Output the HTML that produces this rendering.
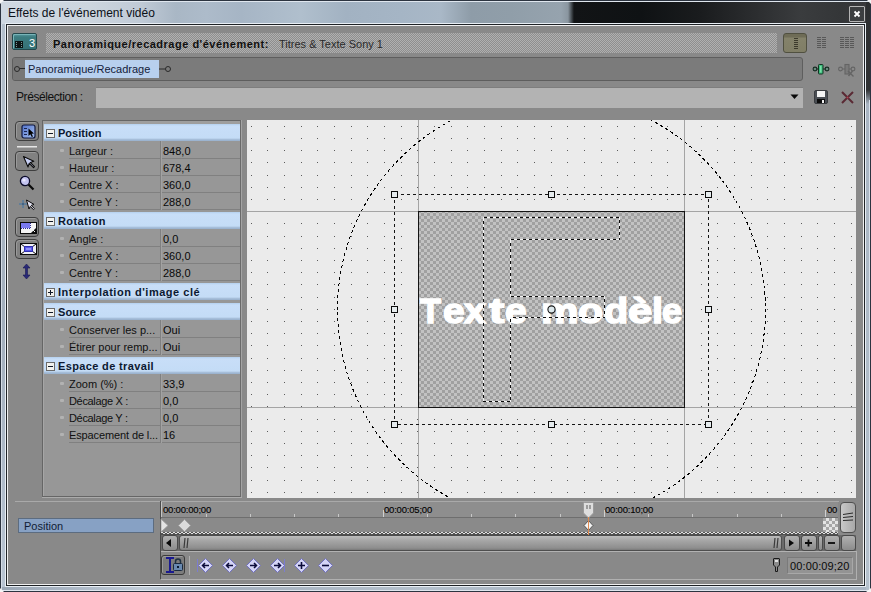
<!DOCTYPE html><html><head><meta charset="utf-8"><style>
*{margin:0;padding:0;box-sizing:border-box}
html,body{width:871px;height:592px;overflow:hidden;background:#fff}
body{position:relative;font-family:"Liberation Sans",sans-serif;}
.ab{position:absolute}
.t{position:absolute;white-space:nowrap;line-height:1}
</style></head><body>
<div class="ab" style="left:0px;top:0px;width:871px;height:592px;background:#2c3440"></div>
<div class="ab" style="left:1px;top:1px;width:869px;height:1px;background:#dfe6ee"></div>
<div class="ab" style="left:1px;top:2px;width:869px;height:22px;background:linear-gradient(90deg,#cfd8e1 0px,#ccd5de 90px,#c0cad6 140px,#a9b7c5 175px,#adbbca 205px,#a6b5c5 240px,#b0bfcd 300px,#a2b2c2 345px,#a5b5c5 400px,#a9b8c7 440px,#8e9ca8 470px,#909ea9 510px,#96a3ae 560px,#8a96a0 567px,#121416 573px,#0f1214 640px,#1a1c1e 700px,#2a2c2e 750px,#3a3c3e 800px,#343638 840px,#3a3a3c 869px)"></div>
<div class="ab" style="left:1px;top:24px;width:1px;height:567px;background:#d4dce6"></div>
<div class="ab" style="left:2px;top:24px;width:3px;height:567px;background:linear-gradient(180deg,#b4c0cc,#a2aebc 300px,#b8c4d2 560px)"></div>
<div class="ab" style="left:866px;top:2px;width:4px;height:589px;background:linear-gradient(180deg,#2c2e30 0px,#303234 88px,#a8b4c2 102px,#b0bcc8 400px,#b4c0cc 589px)"></div>
<div class="ab" style="left:865px;top:24px;width:1px;height:567px;background:#dfe6ee"></div>
<div class="ab" style="left:2px;top:587px;width:864px;height:3px;background:linear-gradient(90deg,#9aa6b4,#a8b4c2 60px,#c0ccd8 140px,#a4b0be 220px,#b4c0cc 420px,#a4b0be 600px,#aab6c4)"></div>
<div class="ab" style="left:5px;top:23px;width:861px;height:564px;background:#e8eef4"></div>
<div class="ab" style="left:6px;top:24px;width:859px;height:562px;background:#1e2226"></div>
<div class="ab" style="left:7px;top:25px;width:857px;height:560px;background:#f0f0f0"></div>
<div class="ab" style="left:8px;top:26px;width:855px;height:558px;background:#898989"></div>
<div class="ab" style="left:1px;top:590px;width:868px;height:1px;background:#dfe6ee"></div>
<div class="ab" style="left:869px;top:100px;width:1px;height:491px;background:#d8e0ea"></div>
<div class="ab" style="left:866px;top:588px;width:5px;height:4px;background:#f4f4f4;clip-path:polygon(100% 0,100% 100%,0 100%)"></div>
<div class="ab" style="left:0px;top:588px;width:4px;height:4px;background:#f4f4f4;clip-path:polygon(0 0,100% 100%,0 100%)"></div>
<div class="ab" style="left:0px;top:0px;width:4px;height:4px;background:#f4f4f4;clip-path:polygon(0 0,100% 0,0 100%)"></div>
<div class="ab" style="left:867px;top:0px;width:4px;height:4px;background:#f4f4f4;clip-path:polygon(0 0,100% 0,100% 100%)"></div>
<div class="t" style="left:8px;top:6.84px;font-size:12px;color:#0c1018;font-weight:normal;">Effets de l'événement vidéo</div>
<div class="ab" style="left:849px;top:6px;width:16px;height:16px;border:1px solid #b4b4b4;background:#3c3e40;border-radius:1px"></div>
<svg class="ab" style="left:849px;top:6px" width="16" height="16"><path d="M5.5 5.5L10.5 10.5M10.5 5.5L5.5 10.5" stroke="#fff" stroke-width="1.8"/></svg>
<div class="ab" style="left:12px;top:33px;width:25px;height:17px;background:linear-gradient(180deg,#5a9aa0 0px,#3c7c80 3px,#357074 16px);border:1px solid #24484c;border-radius:2px;box-shadow:inset 1px 1px 0 #78b4b8"></div>
<div class="ab" style="left:15px;top:41px;width:8px;height:7px;background:#0c1414"></div>
<svg class="ab" style="left:15px;top:41px" width="8" height="7"><g fill="#7a9a9a"><rect x="1" y="1" width="1" height="1"/><rect x="6" y="1" width="1" height="1"/><rect x="1" y="3" width="1" height="1"/><rect x="6" y="3" width="1" height="1"/><rect x="1" y="5" width="1" height="1"/><rect x="6" y="5" width="1" height="1"/></g></svg>
<div class="t" style="left:29px;top:37.69px;font-size:11px;color:#ffffff;font-weight:normal;">3</div>
<div class="ab" style="left:46px;top:33px;width:731px;height:20px;background:repeating-conic-gradient(#b0b0b0 0 25%,#8e8e8e 0 50%) 0 0/2px 2px"></div>
<div class="t" style="left:53px;top:38.69px;font-size:11px;color:#101010;font-weight:bold;letter-spacing:0.5px">Panoramique/recadrage d'événement:</div>
<div class="t" style="left:279px;top:38.69px;font-size:11px;color:#2a2a2a;font-weight:normal;">Titres &amp; Texte Sony 1</div>
<div class="ab" style="left:783px;top:33px;width:24px;height:20px;background:linear-gradient(180deg,#6e6c56 0,#6e6c56 3px,#84826a 4px,#807e66 100%);border:1px solid #505040;border-radius:3px"></div>
<svg class="ab" style="left:783px;top:33px" width="24" height="20"><g fill="#3c3a2c"><rect x="11" y="5" width="4" height="1"/><rect x="11" y="7" width="4" height="1"/><rect x="11" y="9" width="4" height="1"/><rect x="11" y="11" width="4" height="1"/><rect x="11" y="13" width="4" height="1"/><rect x="11" y="15" width="4" height="1"/></g></svg>
<svg class="ab" style="left:816px;top:36px" width="12" height="14"><g fill="#585858"><rect x="1" y="1" width="4" height="1"/><rect x="6" y="1" width="4" height="1"/><rect x="1" y="3" width="4" height="1"/><rect x="6" y="3" width="4" height="1"/><rect x="1" y="5" width="4" height="1"/><rect x="6" y="5" width="4" height="1"/><rect x="1" y="7" width="4" height="1"/><rect x="6" y="7" width="4" height="1"/><rect x="1" y="9" width="4" height="1"/><rect x="6" y="9" width="4" height="1"/><rect x="1" y="11" width="4" height="1"/><rect x="6" y="11" width="4" height="1"/></g></svg>
<svg class="ab" style="left:839px;top:36px" width="16" height="14"><g fill="#585858"><rect x="1" y="1" width="4" height="1"/><rect x="6" y="1" width="4" height="1"/><rect x="11" y="1" width="4" height="1"/><rect x="1" y="3" width="4" height="1"/><rect x="6" y="3" width="4" height="1"/><rect x="11" y="3" width="4" height="1"/><rect x="1" y="5" width="4" height="1"/><rect x="6" y="5" width="4" height="1"/><rect x="11" y="5" width="4" height="1"/><rect x="1" y="7" width="4" height="1"/><rect x="6" y="7" width="4" height="1"/><rect x="11" y="7" width="4" height="1"/><rect x="1" y="9" width="4" height="1"/><rect x="6" y="9" width="4" height="1"/><rect x="11" y="9" width="4" height="1"/><rect x="1" y="11" width="4" height="1"/><rect x="6" y="11" width="4" height="1"/><rect x="11" y="11" width="4" height="1"/></g></svg>
<div class="ab" style="left:12px;top:57px;width:791px;height:24px;background:#7b7b7b;border:1px solid #5e5e5e;border-radius:3px"></div>
<div class="ab" style="left:13px;top:58px;width:12px;height:22px;background:#777;border-radius:2px 0 0 2px"></div>
<div class="ab" style="left:25px;top:60px;width:134px;height:18px;background:#b8d0ee"></div>
<div class="t" style="left:28px;top:63.69px;font-size:11px;color:#14203a;font-weight:normal;">Panoramique/Recadrage</div>
<svg class="ab" style="left:12px;top:60px" width="14" height="18"><circle cx="5" cy="9" r="2.5" fill="none" stroke="#2a2a2a" stroke-width="1"/><path d="M7.5 8.5H13" stroke="#2a2a2a"/></svg>
<svg class="ab" style="left:159px;top:60px" width="14" height="18"><circle cx="9" cy="9" r="2.5" fill="none" stroke="#2a2a2a" stroke-width="1"/><path d="M0 9H6.5" stroke="#2a2a2a"/></svg>
<svg class="ab" style="left:812px;top:62px" width="18" height="14"><circle cx="3" cy="7" r="1.9" fill="#6a8a7e" stroke="#142a20" stroke-width="1.1"/><circle cx="15" cy="7" r="1.9" fill="#6a8a7e" stroke="#142a20" stroke-width="1.1"/><path d="M4.5 7H7M11 7H13.5" stroke="#142a20"/><rect x="6.5" y="2.5" width="4.5" height="9.5" rx="0.8" fill="#3cbc7c" stroke="#143424" stroke-width="1"/><rect x="8" y="4" width="1.5" height="6.5" fill="#7ae0a8"/></svg>
<svg class="ab" style="left:837px;top:62px" width="20" height="17"><g stroke="#646464" fill="none" stroke-width="1.1"><circle cx="3.5" cy="7" r="1.9"/><circle cx="16" cy="7" r="1.9"/><path d="M5.5 7H8M12 7H14"/><rect x="8" y="2.5" width="4" height="9.5" fill="#7a7a7a"/><path d="M11 9L16.5 14.5M15.5 9L11.5 14" stroke-width="1.4"/></g></svg>
<div class="t" style="left:16px;top:90.84px;font-size:12px;color:#101010;font-weight:normal;letter-spacing:-0.43px">Présélection :</div>
<div class="ab" style="left:96px;top:87px;width:707px;height:21px;background:#b3b3b3;border-top:1px solid #7e7e7e"></div>
<svg class="ab" style="left:790px;top:94px" width="10" height="6"><path d="M0.5 0.5H8.5L4.5 5Z" fill="#0a0a0a"/></svg>
<svg class="ab" style="left:814px;top:90px" width="15" height="14"><rect x="0.5" y="0.5" width="13" height="13" rx="1.5" fill="#4a4e54" stroke="#3a3c40"/><rect x="3" y="1" width="8" height="6" fill="#f4f4f4"/><rect x="3" y="9" width="8" height="4" fill="#0a0a0a"/><rect x="8" y="10" width="2" height="3" fill="#f0f0f0"/></svg>
<svg class="ab" style="left:840px;top:90px" width="15" height="15"><path d="M2 2L13 13M13 2L2 13" stroke="#5a2a34" stroke-width="2"/><circle cx="7.5" cy="7.5" r="1" fill="#b04050"/></svg>
<div class="ab" style="left:15px;top:121px;width:24px;height:20px;background:#818181;border:1px solid #3e3e3e;border-radius:4px;box-shadow:inset 1px 1px 0 #9a9a9a"></div>
<svg class="ab" style="left:21px;top:124px" width="15" height="15"><rect x="1" y="1" width="13" height="13" rx="2" fill="url(#gb1)" stroke="#101840" stroke-width="1.2"/><defs><linearGradient id="gb1" x1="0" y1="0" x2="1" y2="1"><stop offset="0" stop-color="#5070c8"/><stop offset="1" stop-color="#a8c4f4"/></linearGradient></defs><g fill="#1a2450"><rect x="3" y="4" width="3" height="1"/><rect x="3" y="7" width="3" height="1"/><rect x="3" y="10" width="3" height="1"/></g><path d="M7.5 4.5V12L9.3 10.3L10.8 13L12 12.4L10.6 9.8L13 9.6Z" fill="#000"/></svg>
<div class="ab" style="left:17px;top:146px;width:20px;height:1px;background:#e6e6e6"></div>
<div class="ab" style="left:17px;top:147px;width:20px;height:1px;background:#b8b8b8"></div>
<div class="ab" style="left:15px;top:151px;width:24px;height:20px;background:#818181;border:1px solid #3e3e3e;border-radius:4px;box-shadow:inset 1px 1px 0 #9a9a9a"></div>
<svg class="ab" style="left:20px;top:154px" width="18" height="16"><path d="M3.5 2.5L8 13L9.2 9.4L13.5 13.7L14.5 12.7L10.2 8.4L13.8 7.2Z" fill="#c8d0f4" stroke="#0a0a0a" stroke-width="1.1" stroke-linejoin="round"/></svg>
<svg class="ab" style="left:18px;top:174px" width="18" height="18"><circle cx="7" cy="7" r="4.6" fill="#c4c4f0" stroke="#0a0a2a" stroke-width="1.3"/><circle cx="6" cy="6" r="1.6" fill="#e8e8fc"/><path d="M10.5 10.5L15.5 15.5" stroke="#0a0a0a" stroke-width="2.2"/></svg>
<svg class="ab" style="left:17px;top:197px" width="20" height="16"><path d="M6 3V11M2 7H10" stroke="#a8d0f0" stroke-width="2" opacity="0.6"/><path d="M6 3V11M2 7H10" stroke="#2a4a6a" stroke-width="1"/><path d="M9.5 3L12 12L13.2 9.4L16.5 12.6L17.5 11.6L14.2 8.4L17 7.4Z" fill="#e0e0f0" stroke="#0a0a0a" stroke-width="1"/></svg>
<div class="ab" style="left:15px;top:217px;width:24px;height:20px;background:#818181;border:1px solid #3e3e3e;border-radius:4px;box-shadow:inset 1px 1px 0 #9a9a9a"></div>
<svg class="ab" style="left:20px;top:222px" width="17" height="12"><rect x="0.5" y="0.5" width="16" height="11" fill="#f4f4f4" stroke="#0a0a0a"/><rect x="1" y="1" width="9" height="5" fill="#7a7af0"/><path d="M1 6.5H10.5V1" stroke="#2a2a9a" stroke-dasharray="1 1" fill="none"/><path d="M16 11L11 11L16 6Z" fill="#0a0a0a"/><path d="M12 7L15 10" stroke="#f4f4f4"/></svg>
<div class="ab" style="left:15px;top:239px;width:24px;height:20px;background:#818181;border:1px solid #3e3e3e;border-radius:4px;box-shadow:inset 1px 1px 0 #9a9a9a"></div>
<svg class="ab" style="left:20px;top:243px" width="17" height="12"><rect x="0.5" y="0.5" width="16" height="11" fill="#f0f0f8" stroke="#0a0a0a"/><path d="M1 1L5 4M16 1L12 4M1 11L5 8M16 11L12 8" stroke="#0a0a0a"/><rect x="4.5" y="3.5" width="8" height="5" fill="#5858e8" stroke="#3030b0"/><rect x="6" y="5" width="5" height="2" fill="#9090f8"/></svg>
<svg class="ab" style="left:22px;top:263px" width="10" height="17"><path d="M4.5 1L1 5H3.5V12H1L4.5 16L8 12H5.5V5H8Z" fill="#2a2a78" stroke="#1a1a50" stroke-width="0.6"/></svg>
<div class="ab" style="left:42px;top:120px;width:199px;height:377px;background:#979797;border:1px solid #666;border-right:1px solid #6a6a6a"></div>
<div class="ab" style="left:43px;top:121px;width:1px;height:375px;background:#a6a6a6"></div>
<div class="ab" style="left:43px;top:121px;width:197px;height:3px;background:#9e9e9e"></div>
<div class="ab" style="left:241px;top:120px;width:1px;height:377px;background:#a4a4a4"></div>
<div class="ab" style="left:42px;top:497px;width:200px;height:1px;background:#ababab"></div>
<div class="ab" style="left:44px;top:124px;width:196px;height:17px;background:linear-gradient(180deg,#b4d0ee 0,#c8def8 2px,#c4dcf6 14px,#9cb4d0 16px)"></div>
<svg class="ab" style="left:46px;top:129px" width="9" height="9"><rect x="0.5" y="0.5" width="8" height="8" fill="#f2f2ee" stroke="#6a6a6a"/><path d="M2 4.5H7" stroke="#101828" stroke-width="1"/></svg>
<div class="t" style="left:58px;top:127.69px;font-size:11px;color:#0c1830;font-weight:bold;letter-spacing:0px">Position</div>
<div class="ab" style="left:69px;top:158px;width:171px;height:1px;background:#808080"></div>
<div class="ab" style="left:60px;top:149px;width:4px;height:3px;background:#b2b2b2;border-radius:1px"></div>
<div class="t" style="left:69px;top:145.69px;font-size:11px;color:#101010;font-weight:normal;">Largeur :</div>
<div class="t" style="left:163px;top:145.69px;font-size:11px;color:#080808;font-weight:normal;">848,0</div>
<div class="ab" style="left:69px;top:175px;width:171px;height:1px;background:#808080"></div>
<div class="ab" style="left:60px;top:166px;width:4px;height:3px;background:#b2b2b2;border-radius:1px"></div>
<div class="t" style="left:69px;top:162.69px;font-size:11px;color:#101010;font-weight:normal;">Hauteur :</div>
<div class="t" style="left:163px;top:162.69px;font-size:11px;color:#080808;font-weight:normal;">678,4</div>
<div class="ab" style="left:69px;top:192px;width:171px;height:1px;background:#808080"></div>
<div class="ab" style="left:60px;top:183px;width:4px;height:3px;background:#b2b2b2;border-radius:1px"></div>
<div class="t" style="left:69px;top:179.69px;font-size:11px;color:#101010;font-weight:normal;">Centre X :</div>
<div class="t" style="left:163px;top:179.69px;font-size:11px;color:#080808;font-weight:normal;">360,0</div>
<div class="ab" style="left:69px;top:209px;width:171px;height:1px;background:#808080"></div>
<div class="ab" style="left:60px;top:200px;width:4px;height:3px;background:#b2b2b2;border-radius:1px"></div>
<div class="t" style="left:69px;top:196.69px;font-size:11px;color:#101010;font-weight:normal;">Centre Y :</div>
<div class="t" style="left:163px;top:196.69px;font-size:11px;color:#080808;font-weight:normal;">288,0</div>
<div class="ab" style="left:160px;top:141px;width:1px;height:69px;background:#808080"></div>
<div class="ab" style="left:161px;top:141px;width:1px;height:69px;background:#a2a2a2"></div>
<div class="ab" style="left:44px;top:212px;width:196px;height:17px;background:linear-gradient(180deg,#b4d0ee 0,#c8def8 2px,#c4dcf6 14px,#9cb4d0 16px)"></div>
<svg class="ab" style="left:46px;top:217px" width="9" height="9"><rect x="0.5" y="0.5" width="8" height="8" fill="#f2f2ee" stroke="#6a6a6a"/><path d="M2 4.5H7" stroke="#101828" stroke-width="1"/></svg>
<div class="t" style="left:58px;top:215.69px;font-size:11px;color:#0c1830;font-weight:bold;letter-spacing:0.42px">Rotation</div>
<div class="ab" style="left:69px;top:246px;width:171px;height:1px;background:#808080"></div>
<div class="ab" style="left:60px;top:237px;width:4px;height:3px;background:#b2b2b2;border-radius:1px"></div>
<div class="t" style="left:69px;top:233.69px;font-size:11px;color:#101010;font-weight:normal;">Angle :</div>
<div class="t" style="left:163px;top:233.69px;font-size:11px;color:#080808;font-weight:normal;">0,0</div>
<div class="ab" style="left:69px;top:263px;width:171px;height:1px;background:#808080"></div>
<div class="ab" style="left:60px;top:254px;width:4px;height:3px;background:#b2b2b2;border-radius:1px"></div>
<div class="t" style="left:69px;top:250.69px;font-size:11px;color:#101010;font-weight:normal;">Centre X :</div>
<div class="t" style="left:163px;top:250.69px;font-size:11px;color:#080808;font-weight:normal;">360,0</div>
<div class="ab" style="left:69px;top:280px;width:171px;height:1px;background:#808080"></div>
<div class="ab" style="left:60px;top:271px;width:4px;height:3px;background:#b2b2b2;border-radius:1px"></div>
<div class="t" style="left:69px;top:267.69px;font-size:11px;color:#101010;font-weight:normal;">Centre Y :</div>
<div class="t" style="left:163px;top:267.69px;font-size:11px;color:#080808;font-weight:normal;">288,0</div>
<div class="ab" style="left:160px;top:229px;width:1px;height:52px;background:#808080"></div>
<div class="ab" style="left:161px;top:229px;width:1px;height:52px;background:#a2a2a2"></div>
<div class="ab" style="left:44px;top:283px;width:196px;height:17px;background:linear-gradient(180deg,#b4d0ee 0,#c8def8 2px,#c4dcf6 14px,#9cb4d0 16px)"></div>
<svg class="ab" style="left:46px;top:288px" width="9" height="9"><rect x="0.5" y="0.5" width="8" height="8" fill="#f2f2ee" stroke="#6a6a6a"/><path d="M2 4.5H7M4.5 2V7" stroke="#101828" stroke-width="1"/></svg>
<div class="t" style="left:58px;top:286.69px;font-size:11px;color:#0c1830;font-weight:bold;letter-spacing:0.52px">Interpolation d'image clé</div>
<div class="ab" style="left:44px;top:303px;width:196px;height:17px;background:linear-gradient(180deg,#b4d0ee 0,#c8def8 2px,#c4dcf6 14px,#9cb4d0 16px)"></div>
<svg class="ab" style="left:46px;top:308px" width="9" height="9"><rect x="0.5" y="0.5" width="8" height="8" fill="#f2f2ee" stroke="#6a6a6a"/><path d="M2 4.5H7" stroke="#101828" stroke-width="1"/></svg>
<div class="t" style="left:58px;top:306.69px;font-size:11px;color:#0c1830;font-weight:bold;letter-spacing:0.12px">Source</div>
<div class="ab" style="left:69px;top:337px;width:171px;height:1px;background:#808080"></div>
<div class="ab" style="left:60px;top:328px;width:4px;height:3px;background:#b2b2b2;border-radius:1px"></div>
<div class="t" style="left:69px;top:324.69px;font-size:11px;color:#101010;font-weight:normal;">Conserver les p...</div>
<div class="t" style="left:163px;top:324.69px;font-size:11px;color:#080808;font-weight:normal;">Oui</div>
<div class="ab" style="left:69px;top:354px;width:171px;height:1px;background:#808080"></div>
<div class="ab" style="left:60px;top:345px;width:4px;height:3px;background:#b2b2b2;border-radius:1px"></div>
<div class="t" style="left:69px;top:341.69px;font-size:11px;color:#101010;font-weight:normal;">Étirer pour remp...</div>
<div class="t" style="left:163px;top:341.69px;font-size:11px;color:#080808;font-weight:normal;">Oui</div>
<div class="ab" style="left:160px;top:320px;width:1px;height:35px;background:#808080"></div>
<div class="ab" style="left:161px;top:320px;width:1px;height:35px;background:#a2a2a2"></div>
<div class="ab" style="left:44px;top:357px;width:196px;height:17px;background:linear-gradient(180deg,#b4d0ee 0,#c8def8 2px,#c4dcf6 14px,#9cb4d0 16px)"></div>
<svg class="ab" style="left:46px;top:362px" width="9" height="9"><rect x="0.5" y="0.5" width="8" height="8" fill="#f2f2ee" stroke="#6a6a6a"/><path d="M2 4.5H7" stroke="#101828" stroke-width="1"/></svg>
<div class="t" style="left:58px;top:360.69px;font-size:11px;color:#0c1830;font-weight:bold;letter-spacing:0.36px">Espace de travail</div>
<div class="ab" style="left:69px;top:391px;width:171px;height:1px;background:#808080"></div>
<div class="ab" style="left:60px;top:382px;width:4px;height:3px;background:#b2b2b2;border-radius:1px"></div>
<div class="t" style="left:69px;top:378.69px;font-size:11px;color:#101010;font-weight:normal;">Zoom (%) :</div>
<div class="t" style="left:163px;top:378.69px;font-size:11px;color:#080808;font-weight:normal;">33,9</div>
<div class="ab" style="left:69px;top:408px;width:171px;height:1px;background:#808080"></div>
<div class="ab" style="left:60px;top:399px;width:4px;height:3px;background:#b2b2b2;border-radius:1px"></div>
<div class="t" style="left:69px;top:395.69px;font-size:11px;color:#101010;font-weight:normal;letter-spacing:-0.33px">Décalage X :</div>
<div class="t" style="left:163px;top:395.69px;font-size:11px;color:#080808;font-weight:normal;">0,0</div>
<div class="ab" style="left:69px;top:425px;width:171px;height:1px;background:#808080"></div>
<div class="ab" style="left:60px;top:416px;width:4px;height:3px;background:#b2b2b2;border-radius:1px"></div>
<div class="t" style="left:69px;top:412.69px;font-size:11px;color:#101010;font-weight:normal;letter-spacing:-0.33px">Décalage Y :</div>
<div class="t" style="left:163px;top:412.69px;font-size:11px;color:#080808;font-weight:normal;">0,0</div>
<div class="ab" style="left:69px;top:442px;width:171px;height:1px;background:#808080"></div>
<div class="ab" style="left:60px;top:433px;width:4px;height:3px;background:#b2b2b2;border-radius:1px"></div>
<div class="t" style="left:69px;top:429.69px;font-size:11px;color:#101010;font-weight:normal;letter-spacing:-0.12px">Espacement de l...</div>
<div class="t" style="left:163px;top:429.69px;font-size:11px;color:#080808;font-weight:normal;">16</div>
<div class="ab" style="left:160px;top:374px;width:1px;height:69px;background:#808080"></div>
<div class="ab" style="left:161px;top:374px;width:1px;height:69px;background:#a2a2a2"></div>
<svg class="ab" style="left:247px;top:120px" width="609" height="378" shape-rendering="crispEdges"><defs><pattern id="chk" x="0" y="0" width="6" height="6" patternUnits="userSpaceOnUse"><rect width="6" height="6" fill="#a0a0a0"/><rect width="3" height="3" fill="#c2c2c2"/><rect x="3" y="3" width="3" height="3" fill="#c2c2c2"/></pattern></defs><rect width="609" height="378" fill="#ebebeb"/><path d="M4 6h1v1h-1zM4 18h1v1h-1zM4 30h1v1h-1zM4 42h1v1h-1zM4 55h1v1h-1zM4 67h1v1h-1zM4 79h1v1h-1zM4 91h1v1h-1zM4 103h1v1h-1zM4 116h1v1h-1zM4 128h1v1h-1zM4 140h1v1h-1zM4 152h1v1h-1zM4 164h1v1h-1zM4 177h1v1h-1zM4 189h1v1h-1zM4 201h1v1h-1zM4 213h1v1h-1zM4 225h1v1h-1zM4 238h1v1h-1zM4 250h1v1h-1zM4 262h1v1h-1zM4 274h1v1h-1zM4 286h1v1h-1zM4 299h1v1h-1zM4 311h1v1h-1zM4 323h1v1h-1zM4 335h1v1h-1zM4 347h1v1h-1zM4 360h1v1h-1zM4 372h1v1h-1zM20 6h1v1h-1zM20 18h1v1h-1zM20 30h1v1h-1zM20 42h1v1h-1zM20 55h1v1h-1zM20 67h1v1h-1zM20 79h1v1h-1zM20 91h1v1h-1zM20 103h1v1h-1zM20 116h1v1h-1zM20 128h1v1h-1zM20 140h1v1h-1zM20 152h1v1h-1zM20 164h1v1h-1zM20 177h1v1h-1zM20 189h1v1h-1zM20 201h1v1h-1zM20 213h1v1h-1zM20 225h1v1h-1zM20 238h1v1h-1zM20 250h1v1h-1zM20 262h1v1h-1zM20 274h1v1h-1zM20 286h1v1h-1zM20 299h1v1h-1zM20 311h1v1h-1zM20 323h1v1h-1zM20 335h1v1h-1zM20 347h1v1h-1zM20 360h1v1h-1zM20 372h1v1h-1zM37 6h1v1h-1zM37 18h1v1h-1zM37 30h1v1h-1zM37 42h1v1h-1zM37 55h1v1h-1zM37 67h1v1h-1zM37 79h1v1h-1zM37 91h1v1h-1zM37 103h1v1h-1zM37 116h1v1h-1zM37 128h1v1h-1zM37 140h1v1h-1zM37 152h1v1h-1zM37 164h1v1h-1zM37 177h1v1h-1zM37 189h1v1h-1zM37 201h1v1h-1zM37 213h1v1h-1zM37 225h1v1h-1zM37 238h1v1h-1zM37 250h1v1h-1zM37 262h1v1h-1zM37 274h1v1h-1zM37 286h1v1h-1zM37 299h1v1h-1zM37 311h1v1h-1zM37 323h1v1h-1zM37 335h1v1h-1zM37 347h1v1h-1zM37 360h1v1h-1zM37 372h1v1h-1zM54 6h1v1h-1zM54 18h1v1h-1zM54 30h1v1h-1zM54 42h1v1h-1zM54 55h1v1h-1zM54 67h1v1h-1zM54 79h1v1h-1zM54 91h1v1h-1zM54 103h1v1h-1zM54 116h1v1h-1zM54 128h1v1h-1zM54 140h1v1h-1zM54 152h1v1h-1zM54 164h1v1h-1zM54 177h1v1h-1zM54 189h1v1h-1zM54 201h1v1h-1zM54 213h1v1h-1zM54 225h1v1h-1zM54 238h1v1h-1zM54 250h1v1h-1zM54 262h1v1h-1zM54 274h1v1h-1zM54 286h1v1h-1zM54 299h1v1h-1zM54 311h1v1h-1zM54 323h1v1h-1zM54 335h1v1h-1zM54 347h1v1h-1zM54 360h1v1h-1zM54 372h1v1h-1zM70 6h1v1h-1zM70 18h1v1h-1zM70 30h1v1h-1zM70 42h1v1h-1zM70 55h1v1h-1zM70 67h1v1h-1zM70 79h1v1h-1zM70 91h1v1h-1zM70 103h1v1h-1zM70 116h1v1h-1zM70 128h1v1h-1zM70 140h1v1h-1zM70 152h1v1h-1zM70 164h1v1h-1zM70 177h1v1h-1zM70 189h1v1h-1zM70 201h1v1h-1zM70 213h1v1h-1zM70 225h1v1h-1zM70 238h1v1h-1zM70 250h1v1h-1zM70 262h1v1h-1zM70 274h1v1h-1zM70 286h1v1h-1zM70 299h1v1h-1zM70 311h1v1h-1zM70 323h1v1h-1zM70 335h1v1h-1zM70 347h1v1h-1zM70 360h1v1h-1zM70 372h1v1h-1zM87 6h1v1h-1zM87 18h1v1h-1zM87 30h1v1h-1zM87 42h1v1h-1zM87 55h1v1h-1zM87 67h1v1h-1zM87 79h1v1h-1zM87 91h1v1h-1zM87 103h1v1h-1zM87 116h1v1h-1zM87 128h1v1h-1zM87 140h1v1h-1zM87 152h1v1h-1zM87 164h1v1h-1zM87 177h1v1h-1zM87 189h1v1h-1zM87 201h1v1h-1zM87 213h1v1h-1zM87 225h1v1h-1zM87 238h1v1h-1zM87 250h1v1h-1zM87 262h1v1h-1zM87 274h1v1h-1zM87 286h1v1h-1zM87 299h1v1h-1zM87 311h1v1h-1zM87 323h1v1h-1zM87 335h1v1h-1zM87 347h1v1h-1zM87 360h1v1h-1zM87 372h1v1h-1zM104 6h1v1h-1zM104 18h1v1h-1zM104 30h1v1h-1zM104 42h1v1h-1zM104 55h1v1h-1zM104 67h1v1h-1zM104 79h1v1h-1zM104 91h1v1h-1zM104 103h1v1h-1zM104 116h1v1h-1zM104 128h1v1h-1zM104 140h1v1h-1zM104 152h1v1h-1zM104 164h1v1h-1zM104 177h1v1h-1zM104 189h1v1h-1zM104 201h1v1h-1zM104 213h1v1h-1zM104 225h1v1h-1zM104 238h1v1h-1zM104 250h1v1h-1zM104 262h1v1h-1zM104 274h1v1h-1zM104 286h1v1h-1zM104 299h1v1h-1zM104 311h1v1h-1zM104 323h1v1h-1zM104 335h1v1h-1zM104 347h1v1h-1zM104 360h1v1h-1zM104 372h1v1h-1zM120 6h1v1h-1zM120 18h1v1h-1zM120 30h1v1h-1zM120 42h1v1h-1zM120 55h1v1h-1zM120 67h1v1h-1zM120 79h1v1h-1zM120 91h1v1h-1zM120 103h1v1h-1zM120 116h1v1h-1zM120 128h1v1h-1zM120 140h1v1h-1zM120 152h1v1h-1zM120 164h1v1h-1zM120 177h1v1h-1zM120 189h1v1h-1zM120 201h1v1h-1zM120 213h1v1h-1zM120 225h1v1h-1zM120 238h1v1h-1zM120 250h1v1h-1zM120 262h1v1h-1zM120 274h1v1h-1zM120 286h1v1h-1zM120 299h1v1h-1zM120 311h1v1h-1zM120 323h1v1h-1zM120 335h1v1h-1zM120 347h1v1h-1zM120 360h1v1h-1zM120 372h1v1h-1zM137 6h1v1h-1zM137 18h1v1h-1zM137 30h1v1h-1zM137 42h1v1h-1zM137 55h1v1h-1zM137 67h1v1h-1zM137 79h1v1h-1zM137 91h1v1h-1zM137 103h1v1h-1zM137 116h1v1h-1zM137 128h1v1h-1zM137 140h1v1h-1zM137 152h1v1h-1zM137 164h1v1h-1zM137 177h1v1h-1zM137 189h1v1h-1zM137 201h1v1h-1zM137 213h1v1h-1zM137 225h1v1h-1zM137 238h1v1h-1zM137 250h1v1h-1zM137 262h1v1h-1zM137 274h1v1h-1zM137 286h1v1h-1zM137 299h1v1h-1zM137 311h1v1h-1zM137 323h1v1h-1zM137 335h1v1h-1zM137 347h1v1h-1zM137 360h1v1h-1zM137 372h1v1h-1zM154 6h1v1h-1zM154 18h1v1h-1zM154 30h1v1h-1zM154 42h1v1h-1zM154 55h1v1h-1zM154 67h1v1h-1zM154 79h1v1h-1zM154 91h1v1h-1zM154 103h1v1h-1zM154 116h1v1h-1zM154 128h1v1h-1zM154 140h1v1h-1zM154 152h1v1h-1zM154 164h1v1h-1zM154 177h1v1h-1zM154 189h1v1h-1zM154 201h1v1h-1zM154 213h1v1h-1zM154 225h1v1h-1zM154 238h1v1h-1zM154 250h1v1h-1zM154 262h1v1h-1zM154 274h1v1h-1zM154 286h1v1h-1zM154 299h1v1h-1zM154 311h1v1h-1zM154 323h1v1h-1zM154 335h1v1h-1zM154 347h1v1h-1zM154 360h1v1h-1zM154 372h1v1h-1zM170 6h1v1h-1zM170 18h1v1h-1zM170 30h1v1h-1zM170 42h1v1h-1zM170 55h1v1h-1zM170 67h1v1h-1zM170 79h1v1h-1zM170 299h1v1h-1zM170 311h1v1h-1zM170 323h1v1h-1zM170 335h1v1h-1zM170 347h1v1h-1zM170 360h1v1h-1zM170 372h1v1h-1zM187 6h1v1h-1zM187 18h1v1h-1zM187 30h1v1h-1zM187 42h1v1h-1zM187 55h1v1h-1zM187 67h1v1h-1zM187 79h1v1h-1zM187 299h1v1h-1zM187 311h1v1h-1zM187 323h1v1h-1zM187 335h1v1h-1zM187 347h1v1h-1zM187 360h1v1h-1zM187 372h1v1h-1zM204 6h1v1h-1zM204 18h1v1h-1zM204 30h1v1h-1zM204 42h1v1h-1zM204 55h1v1h-1zM204 67h1v1h-1zM204 79h1v1h-1zM204 299h1v1h-1zM204 311h1v1h-1zM204 323h1v1h-1zM204 335h1v1h-1zM204 347h1v1h-1zM204 360h1v1h-1zM204 372h1v1h-1zM220 6h1v1h-1zM220 18h1v1h-1zM220 30h1v1h-1zM220 42h1v1h-1zM220 55h1v1h-1zM220 67h1v1h-1zM220 79h1v1h-1zM220 299h1v1h-1zM220 311h1v1h-1zM220 323h1v1h-1zM220 335h1v1h-1zM220 347h1v1h-1zM220 360h1v1h-1zM220 372h1v1h-1zM237 6h1v1h-1zM237 18h1v1h-1zM237 30h1v1h-1zM237 42h1v1h-1zM237 55h1v1h-1zM237 67h1v1h-1zM237 79h1v1h-1zM237 299h1v1h-1zM237 311h1v1h-1zM237 323h1v1h-1zM237 335h1v1h-1zM237 347h1v1h-1zM237 360h1v1h-1zM237 372h1v1h-1zM254 6h1v1h-1zM254 18h1v1h-1zM254 30h1v1h-1zM254 42h1v1h-1zM254 55h1v1h-1zM254 67h1v1h-1zM254 79h1v1h-1zM254 299h1v1h-1zM254 311h1v1h-1zM254 323h1v1h-1zM254 335h1v1h-1zM254 347h1v1h-1zM254 360h1v1h-1zM254 372h1v1h-1zM270 6h1v1h-1zM270 18h1v1h-1zM270 30h1v1h-1zM270 42h1v1h-1zM270 55h1v1h-1zM270 67h1v1h-1zM270 79h1v1h-1zM270 299h1v1h-1zM270 311h1v1h-1zM270 323h1v1h-1zM270 335h1v1h-1zM270 347h1v1h-1zM270 360h1v1h-1zM270 372h1v1h-1zM287 6h1v1h-1zM287 18h1v1h-1zM287 30h1v1h-1zM287 42h1v1h-1zM287 55h1v1h-1zM287 67h1v1h-1zM287 79h1v1h-1zM287 299h1v1h-1zM287 311h1v1h-1zM287 323h1v1h-1zM287 335h1v1h-1zM287 347h1v1h-1zM287 360h1v1h-1zM287 372h1v1h-1zM304 6h1v1h-1zM304 18h1v1h-1zM304 30h1v1h-1zM304 42h1v1h-1zM304 55h1v1h-1zM304 67h1v1h-1zM304 79h1v1h-1zM304 299h1v1h-1zM304 311h1v1h-1zM304 323h1v1h-1zM304 335h1v1h-1zM304 347h1v1h-1zM304 360h1v1h-1zM304 372h1v1h-1zM320 6h1v1h-1zM320 18h1v1h-1zM320 30h1v1h-1zM320 42h1v1h-1zM320 55h1v1h-1zM320 67h1v1h-1zM320 79h1v1h-1zM320 299h1v1h-1zM320 311h1v1h-1zM320 323h1v1h-1zM320 335h1v1h-1zM320 347h1v1h-1zM320 360h1v1h-1zM320 372h1v1h-1zM337 6h1v1h-1zM337 18h1v1h-1zM337 30h1v1h-1zM337 42h1v1h-1zM337 55h1v1h-1zM337 67h1v1h-1zM337 79h1v1h-1zM337 299h1v1h-1zM337 311h1v1h-1zM337 323h1v1h-1zM337 335h1v1h-1zM337 347h1v1h-1zM337 360h1v1h-1zM337 372h1v1h-1zM354 6h1v1h-1zM354 18h1v1h-1zM354 30h1v1h-1zM354 42h1v1h-1zM354 55h1v1h-1zM354 67h1v1h-1zM354 79h1v1h-1zM354 299h1v1h-1zM354 311h1v1h-1zM354 323h1v1h-1zM354 335h1v1h-1zM354 347h1v1h-1zM354 360h1v1h-1zM354 372h1v1h-1zM370 6h1v1h-1zM370 18h1v1h-1zM370 30h1v1h-1zM370 42h1v1h-1zM370 55h1v1h-1zM370 67h1v1h-1zM370 79h1v1h-1zM370 299h1v1h-1zM370 311h1v1h-1zM370 323h1v1h-1zM370 335h1v1h-1zM370 347h1v1h-1zM370 360h1v1h-1zM370 372h1v1h-1zM387 6h1v1h-1zM387 18h1v1h-1zM387 30h1v1h-1zM387 42h1v1h-1zM387 55h1v1h-1zM387 67h1v1h-1zM387 79h1v1h-1zM387 299h1v1h-1zM387 311h1v1h-1zM387 323h1v1h-1zM387 335h1v1h-1zM387 347h1v1h-1zM387 360h1v1h-1zM387 372h1v1h-1zM404 6h1v1h-1zM404 18h1v1h-1zM404 30h1v1h-1zM404 42h1v1h-1zM404 55h1v1h-1zM404 67h1v1h-1zM404 79h1v1h-1zM404 299h1v1h-1zM404 311h1v1h-1zM404 323h1v1h-1zM404 335h1v1h-1zM404 347h1v1h-1zM404 360h1v1h-1zM404 372h1v1h-1zM420 6h1v1h-1zM420 18h1v1h-1zM420 30h1v1h-1zM420 42h1v1h-1zM420 55h1v1h-1zM420 67h1v1h-1zM420 79h1v1h-1zM420 299h1v1h-1zM420 311h1v1h-1zM420 323h1v1h-1zM420 335h1v1h-1zM420 347h1v1h-1zM420 360h1v1h-1zM420 372h1v1h-1zM437 6h1v1h-1zM437 18h1v1h-1zM437 30h1v1h-1zM437 42h1v1h-1zM437 55h1v1h-1zM437 67h1v1h-1zM437 79h1v1h-1zM437 299h1v1h-1zM437 311h1v1h-1zM437 323h1v1h-1zM437 335h1v1h-1zM437 347h1v1h-1zM437 360h1v1h-1zM437 372h1v1h-1zM454 6h1v1h-1zM454 18h1v1h-1zM454 30h1v1h-1zM454 42h1v1h-1zM454 55h1v1h-1zM454 67h1v1h-1zM454 79h1v1h-1zM454 91h1v1h-1zM454 103h1v1h-1zM454 116h1v1h-1zM454 128h1v1h-1zM454 140h1v1h-1zM454 152h1v1h-1zM454 164h1v1h-1zM454 177h1v1h-1zM454 189h1v1h-1zM454 201h1v1h-1zM454 213h1v1h-1zM454 225h1v1h-1zM454 238h1v1h-1zM454 250h1v1h-1zM454 262h1v1h-1zM454 274h1v1h-1zM454 286h1v1h-1zM454 299h1v1h-1zM454 311h1v1h-1zM454 323h1v1h-1zM454 335h1v1h-1zM454 347h1v1h-1zM454 360h1v1h-1zM454 372h1v1h-1zM470 6h1v1h-1zM470 18h1v1h-1zM470 30h1v1h-1zM470 42h1v1h-1zM470 55h1v1h-1zM470 67h1v1h-1zM470 79h1v1h-1zM470 91h1v1h-1zM470 103h1v1h-1zM470 116h1v1h-1zM470 128h1v1h-1zM470 140h1v1h-1zM470 152h1v1h-1zM470 164h1v1h-1zM470 177h1v1h-1zM470 189h1v1h-1zM470 201h1v1h-1zM470 213h1v1h-1zM470 225h1v1h-1zM470 238h1v1h-1zM470 250h1v1h-1zM470 262h1v1h-1zM470 274h1v1h-1zM470 286h1v1h-1zM470 299h1v1h-1zM470 311h1v1h-1zM470 323h1v1h-1zM470 335h1v1h-1zM470 347h1v1h-1zM470 360h1v1h-1zM470 372h1v1h-1zM487 6h1v1h-1zM487 18h1v1h-1zM487 30h1v1h-1zM487 42h1v1h-1zM487 55h1v1h-1zM487 67h1v1h-1zM487 79h1v1h-1zM487 91h1v1h-1zM487 103h1v1h-1zM487 116h1v1h-1zM487 128h1v1h-1zM487 140h1v1h-1zM487 152h1v1h-1zM487 164h1v1h-1zM487 177h1v1h-1zM487 189h1v1h-1zM487 201h1v1h-1zM487 213h1v1h-1zM487 225h1v1h-1zM487 238h1v1h-1zM487 250h1v1h-1zM487 262h1v1h-1zM487 274h1v1h-1zM487 286h1v1h-1zM487 299h1v1h-1zM487 311h1v1h-1zM487 323h1v1h-1zM487 335h1v1h-1zM487 347h1v1h-1zM487 360h1v1h-1zM487 372h1v1h-1zM504 6h1v1h-1zM504 18h1v1h-1zM504 30h1v1h-1zM504 42h1v1h-1zM504 55h1v1h-1zM504 67h1v1h-1zM504 79h1v1h-1zM504 91h1v1h-1zM504 103h1v1h-1zM504 116h1v1h-1zM504 128h1v1h-1zM504 140h1v1h-1zM504 152h1v1h-1zM504 164h1v1h-1zM504 177h1v1h-1zM504 189h1v1h-1zM504 201h1v1h-1zM504 213h1v1h-1zM504 225h1v1h-1zM504 238h1v1h-1zM504 250h1v1h-1zM504 262h1v1h-1zM504 274h1v1h-1zM504 286h1v1h-1zM504 299h1v1h-1zM504 311h1v1h-1zM504 323h1v1h-1zM504 335h1v1h-1zM504 347h1v1h-1zM504 360h1v1h-1zM504 372h1v1h-1zM520 6h1v1h-1zM520 18h1v1h-1zM520 30h1v1h-1zM520 42h1v1h-1zM520 55h1v1h-1zM520 67h1v1h-1zM520 79h1v1h-1zM520 91h1v1h-1zM520 103h1v1h-1zM520 116h1v1h-1zM520 128h1v1h-1zM520 140h1v1h-1zM520 152h1v1h-1zM520 164h1v1h-1zM520 177h1v1h-1zM520 189h1v1h-1zM520 201h1v1h-1zM520 213h1v1h-1zM520 225h1v1h-1zM520 238h1v1h-1zM520 250h1v1h-1zM520 262h1v1h-1zM520 274h1v1h-1zM520 286h1v1h-1zM520 299h1v1h-1zM520 311h1v1h-1zM520 323h1v1h-1zM520 335h1v1h-1zM520 347h1v1h-1zM520 360h1v1h-1zM520 372h1v1h-1zM537 6h1v1h-1zM537 18h1v1h-1zM537 30h1v1h-1zM537 42h1v1h-1zM537 55h1v1h-1zM537 67h1v1h-1zM537 79h1v1h-1zM537 91h1v1h-1zM537 103h1v1h-1zM537 116h1v1h-1zM537 128h1v1h-1zM537 140h1v1h-1zM537 152h1v1h-1zM537 164h1v1h-1zM537 177h1v1h-1zM537 189h1v1h-1zM537 201h1v1h-1zM537 213h1v1h-1zM537 225h1v1h-1zM537 238h1v1h-1zM537 250h1v1h-1zM537 262h1v1h-1zM537 274h1v1h-1zM537 286h1v1h-1zM537 299h1v1h-1zM537 311h1v1h-1zM537 323h1v1h-1zM537 335h1v1h-1zM537 347h1v1h-1zM537 360h1v1h-1zM537 372h1v1h-1zM554 6h1v1h-1zM554 18h1v1h-1zM554 30h1v1h-1zM554 42h1v1h-1zM554 55h1v1h-1zM554 67h1v1h-1zM554 79h1v1h-1zM554 91h1v1h-1zM554 103h1v1h-1zM554 116h1v1h-1zM554 128h1v1h-1zM554 140h1v1h-1zM554 152h1v1h-1zM554 164h1v1h-1zM554 177h1v1h-1zM554 189h1v1h-1zM554 201h1v1h-1zM554 213h1v1h-1zM554 225h1v1h-1zM554 238h1v1h-1zM554 250h1v1h-1zM554 262h1v1h-1zM554 274h1v1h-1zM554 286h1v1h-1zM554 299h1v1h-1zM554 311h1v1h-1zM554 323h1v1h-1zM554 335h1v1h-1zM554 347h1v1h-1zM554 360h1v1h-1zM554 372h1v1h-1zM570 6h1v1h-1zM570 18h1v1h-1zM570 30h1v1h-1zM570 42h1v1h-1zM570 55h1v1h-1zM570 67h1v1h-1zM570 79h1v1h-1zM570 91h1v1h-1zM570 103h1v1h-1zM570 116h1v1h-1zM570 128h1v1h-1zM570 140h1v1h-1zM570 152h1v1h-1zM570 164h1v1h-1zM570 177h1v1h-1zM570 189h1v1h-1zM570 201h1v1h-1zM570 213h1v1h-1zM570 225h1v1h-1zM570 238h1v1h-1zM570 250h1v1h-1zM570 262h1v1h-1zM570 274h1v1h-1zM570 286h1v1h-1zM570 299h1v1h-1zM570 311h1v1h-1zM570 323h1v1h-1zM570 335h1v1h-1zM570 347h1v1h-1zM570 360h1v1h-1zM570 372h1v1h-1zM587 6h1v1h-1zM587 18h1v1h-1zM587 30h1v1h-1zM587 42h1v1h-1zM587 55h1v1h-1zM587 67h1v1h-1zM587 79h1v1h-1zM587 91h1v1h-1zM587 103h1v1h-1zM587 116h1v1h-1zM587 128h1v1h-1zM587 140h1v1h-1zM587 152h1v1h-1zM587 164h1v1h-1zM587 177h1v1h-1zM587 189h1v1h-1zM587 201h1v1h-1zM587 213h1v1h-1zM587 225h1v1h-1zM587 238h1v1h-1zM587 250h1v1h-1zM587 262h1v1h-1zM587 274h1v1h-1zM587 286h1v1h-1zM587 299h1v1h-1zM587 311h1v1h-1zM587 323h1v1h-1zM587 335h1v1h-1zM587 347h1v1h-1zM587 360h1v1h-1zM587 372h1v1h-1zM604 6h1v1h-1zM604 18h1v1h-1zM604 30h1v1h-1zM604 42h1v1h-1zM604 55h1v1h-1zM604 67h1v1h-1zM604 79h1v1h-1zM604 91h1v1h-1zM604 103h1v1h-1zM604 116h1v1h-1zM604 128h1v1h-1zM604 140h1v1h-1zM604 152h1v1h-1zM604 164h1v1h-1zM604 177h1v1h-1zM604 189h1v1h-1zM604 201h1v1h-1zM604 213h1v1h-1zM604 225h1v1h-1zM604 238h1v1h-1zM604 250h1v1h-1zM604 262h1v1h-1zM604 274h1v1h-1zM604 286h1v1h-1zM604 299h1v1h-1zM604 311h1v1h-1zM604 323h1v1h-1zM604 335h1v1h-1zM604 347h1v1h-1zM604 360h1v1h-1zM604 372h1v1h-1z" fill="#5c5c5c"/><rect x="171" y="0" width="1" height="378" fill="#a4a4a4"/><rect x="437" y="0" width="1" height="378" fill="#a4a4a4"/><rect x="0" y="91" width="609" height="1" fill="#a4a4a4"/><rect x="0" y="287" width="609" height="1" fill="#a4a4a4"/><rect x="171" y="91" width="267" height="197" fill="url(#chk)"/><rect x="171.5" y="91.5" width="266" height="196" fill="none" stroke="#141414" stroke-width="1"/></svg>
<div class="ab" style="left:419px;top:212px;width:265px;height:195px;overflow:hidden">
<div class="t" style="left:0.80px;top:81px;font-size:35px;font-weight:bold;color:#fff;-webkit-text-stroke:1.5px #fff;transform-origin:0 0;transform:scaleX(0.977)">T</div>
<div class="t" style="left:23.89px;top:81px;font-size:35px;font-weight:bold;color:#fff;-webkit-text-stroke:1.5px #fff;transform-origin:0 0;transform:scaleX(1.111)">e</div>
<div class="t" style="left:44.50px;top:81px;font-size:35px;font-weight:bold;color:#fff;-webkit-text-stroke:1.5px #fff;transform-origin:0 0;transform:scaleX(1.115)">x</div>
<div class="t" style="left:70.20px;top:81px;font-size:35px;font-weight:bold;color:#fff;-webkit-text-stroke:1.5px #fff;transform-origin:0 0;transform:scaleX(1.317)">t</div>
<div class="t" style="left:86.48px;top:81px;font-size:35px;font-weight:bold;color:#fff;-webkit-text-stroke:1.5px #fff;transform-origin:0 0;transform:scaleX(1.117)">e</div>
<div class="t" style="left:121.99px;top:81px;font-size:35px;font-weight:bold;color:#fff;-webkit-text-stroke:1.5px #fff;transform-origin:0 0;transform:scaleX(1.207)">m</div>
<div class="t" style="left:158.83px;top:81px;font-size:35px;font-weight:bold;color:#fff;-webkit-text-stroke:1.5px #fff;transform-origin:0 0;transform:scaleX(1.175)">o</div>
<div class="t" style="left:185.37px;top:81px;font-size:35px;font-weight:bold;color:#fff;-webkit-text-stroke:1.5px #fff;transform-origin:0 0;transform:scaleX(1.132)">d</div>
<div class="t" style="left:208.65px;top:81px;font-size:35px;font-weight:bold;color:#fff;-webkit-text-stroke:1.5px #fff;transform-origin:0 0;transform:scaleX(1.250)">è</div>
<div class="t" style="left:233.03px;top:81px;font-size:35px;font-weight:bold;color:#fff;-webkit-text-stroke:1.5px #fff;transform-origin:0 0;transform:scaleX(1.133)">l</div>
<div class="t" style="left:242.97px;top:81px;font-size:35px;font-weight:bold;color:#fff;-webkit-text-stroke:1.5px #fff;transform-origin:0 0;transform:scaleX(1.033)">e</div>
</div>
<svg class="ab" style="left:247px;top:120px" width="609" height="378"><circle cx="304.5" cy="189.5" r="214" fill="none" stroke="#000" stroke-width="1" stroke-dasharray="3 3" shape-rendering="crispEdges"/><path d="M236.5 97.5L372.5 97.5L372.5 119.5L263.5 119.5L263.5 176.5L357.5 176.5L357.5 197.5L263.5 197.5L263.5 281.5L236.5 281.5Z" fill="none" stroke="#f4f4f4" stroke-width="1" shape-rendering="crispEdges"/><path d="M236.5 97.5L372.5 97.5L372.5 119.5L263.5 119.5L263.5 176.5L357.5 176.5L357.5 197.5L263.5 197.5L263.5 281.5L236.5 281.5Z" fill="none" stroke="#0a0a0a" stroke-width="1" stroke-dasharray="3 3" shape-rendering="crispEdges"/><rect x="147.5" y="74.5" width="314" height="230" fill="none" stroke="#141414" stroke-width="1" stroke-dasharray="3 3" shape-rendering="crispEdges"/><rect x="144.5" y="71.5" width="6" height="6" fill="#e6ecee" stroke="#0a0a0a" stroke-width="1" shape-rendering="crispEdges"/><rect x="144.5" y="186.5" width="6" height="6" fill="#e6ecee" stroke="#0a0a0a" stroke-width="1" shape-rendering="crispEdges"/><rect x="144.5" y="301.5" width="6" height="6" fill="#e6ecee" stroke="#0a0a0a" stroke-width="1" shape-rendering="crispEdges"/><rect x="301.5" y="71.5" width="6" height="6" fill="#e6ecee" stroke="#0a0a0a" stroke-width="1" shape-rendering="crispEdges"/><rect x="301.5" y="301.5" width="6" height="6" fill="#e6ecee" stroke="#0a0a0a" stroke-width="1" shape-rendering="crispEdges"/><rect x="458.5" y="71.5" width="6" height="6" fill="#e6ecee" stroke="#0a0a0a" stroke-width="1" shape-rendering="crispEdges"/><rect x="458.5" y="186.5" width="6" height="6" fill="#e6ecee" stroke="#0a0a0a" stroke-width="1" shape-rendering="crispEdges"/><rect x="458.5" y="301.5" width="6" height="6" fill="#e6ecee" stroke="#0a0a0a" stroke-width="1" shape-rendering="crispEdges"/><circle cx="304.5" cy="189.5" r="3.6" fill="#dce8ec" stroke="#141414" stroke-width="1.1"/></svg>
<div class="ab" style="left:15px;top:501px;width:824px;height:1px;background:#a9a9a9"></div>
<div class="ab" style="left:18px;top:518px;width:136px;height:15px;background:#87a1c4;border:1px solid #5c6c80"></div>
<div class="t" style="left:24px;top:520.69px;font-size:11px;color:#101c34;font-weight:normal;">Position</div>
<div class="ab" style="left:160px;top:501px;width:1px;height:78px;background:#4a4a4a"></div>
<div class="ab" style="left:161px;top:502px;width:677px;height:15px;background:#8e8e8e"></div>
<div class="ab" style="left:161px;top:502px;width:1px;height:16px;background:#c4c4c4"></div>
<div class="ab" style="left:161px;top:517px;width:677px;height:1px;background:#6e6e6e"></div>
<svg class="ab" style="left:161px;top:502px" width="677" height="32" shape-rendering="crispEdges"><rect x="45" y="12" width="1" height="3" fill="#c8c8c8"/><rect x="89" y="12" width="1" height="3" fill="#c8c8c8"/><rect x="133" y="12" width="1" height="3" fill="#c8c8c8"/><rect x="177" y="12" width="1" height="3" fill="#c8c8c8"/><rect x="222" y="8" width="1" height="7" fill="#d0d0d0"/><rect x="266" y="12" width="1" height="3" fill="#c8c8c8"/><rect x="310" y="12" width="1" height="3" fill="#c8c8c8"/><rect x="354" y="12" width="1" height="3" fill="#c8c8c8"/><rect x="399" y="12" width="1" height="3" fill="#c8c8c8"/><rect x="443" y="8" width="1" height="7" fill="#d0d0d0"/><rect x="487" y="12" width="1" height="3" fill="#c8c8c8"/><rect x="531" y="12" width="1" height="3" fill="#c8c8c8"/><rect x="576" y="12" width="1" height="3" fill="#c8c8c8"/><rect x="620" y="12" width="1" height="3" fill="#c8c8c8"/><rect x="664" y="8" width="1" height="7" fill="#d0d0d0"/></svg>
<div class="t" style="left:163px;top:504.96px;font-size:9.5px;color:#000;font-weight:normal;letter-spacing:-0.2px;-webkit-text-stroke:0.1px #000">00:00:00;00</div>
<div class="t" style="left:384px;top:504.96px;font-size:9.5px;color:#000;font-weight:normal;letter-spacing:-0.2px;-webkit-text-stroke:0.1px #000">00:00:05;00</div>
<div class="t" style="left:605px;top:504.96px;font-size:9.5px;color:#000;font-weight:normal;letter-spacing:-0.2px;-webkit-text-stroke:0.1px #000">00:00:10;00</div>
<div class="t" style="left:827px;top:504.96px;font-size:9.5px;color:#000;font-weight:normal;letter-spacing:-0.2px;-webkit-text-stroke:0.1px #000">00</div>
<div class="ab" style="left:161px;top:518px;width:677px;height:14px;background:#8a8a8a"></div>
<div class="ab" style="left:161px;top:534px;width:677px;height:1px;background:#505050"></div>
<div class="ab" style="left:161px;top:532px;width:677px;height:2px;background-color:#555;background-image:linear-gradient(90deg,#e2e2e2 50%,transparent 50%),linear-gradient(90deg,transparent 50%,#e2e2e2 50%);background-size:4px 1px,4px 1px;background-position:0 0,0 1px;background-repeat:repeat-x"></div>
<div class="ab" style="left:823px;top:518px;width:15px;height:14px;background:repeating-conic-gradient(#e4e4e4 0 25%,#a6a6a6 0 50%) 0 0/6px 6px"></div>
<svg class="ab" style="left:160px;top:517px" width="440" height="18"><path d="M1 2L8 8.5L1 15Z" fill="#e4e4e4" stroke="#a0a0a0" stroke-width="0.8"/><path d="M24.5 2.5L30.5 8.5L24.5 14.5L18.5 8.5Z" fill="#dcdcdc" stroke="#a4a4a4"/></svg>
<svg class="ab" style="left:580px;top:501px" width="18" height="34"><path d="M8.5 16V34" stroke="#e08040" stroke-width="1"/><path d="M4.5 1.5H12.5Q13.5 1.5 13.5 2.5V12L8.5 17L3.5 12V2.5Q3.5 1.5 4.5 1.5Z" fill="#dedede" stroke="#9a9a9a" stroke-width="1"/><path d="M7 4V8M10 4V8" stroke="#5a5a5a" stroke-width="1"/><path d="M8.5 19.5L13 24.5L8.5 29.5L4 24.5Z" fill="#f4f4f4" stroke="#585858" stroke-width="1"/><path d="M8.5 16V34" stroke="#e08a50" stroke-width="1"/></svg>
<div class="ab" style="left:840px;top:502px;width:16px;height:31px;background:linear-gradient(90deg,#c8c8c8,#a8a8a8);border:1px solid #505050;border-radius:4px"></div>
<svg class="ab" style="left:840px;top:502px" width="16" height="31"><path d="M3 12.5L13 11M3 15.5L13 14.5M3 18.5L13 18" stroke="#2a2a2a" stroke-width="1"/></svg>
<div class="ab" style="left:161px;top:535px;width:695px;height:16px;background:#6a6a6a"></div>
<div class="ab" style="left:162px;top:535px;width:16px;height:16px;background:linear-gradient(180deg,#b0b0b0,#8c8c8c);border:1px solid #4a4a4a;border-radius:3px"></div>
<div class="ab" style="left:179px;top:535px;width:603px;height:16px;background:linear-gradient(180deg,#bcbcbc 0,#a8a8a8 4px,#8e8e8e 12px,#7a7a7a 100%);border:1px solid #4e4e4e;border-radius:3px"></div>
<div class="ab" style="left:784px;top:535px;width:16px;height:16px;background:linear-gradient(180deg,#b0b0b0,#8c8c8c);border:1px solid #4a4a4a;border-radius:3px"></div>
<div class="ab" style="left:801px;top:535px;width:16px;height:16px;background:linear-gradient(180deg,#b0b0b0,#8c8c8c);border:1px solid #4a4a4a;border-radius:3px"></div>
<div class="ab" style="left:818px;top:535px;width:5px;height:16px;background:linear-gradient(180deg,#b0b0b0,#8c8c8c);border:1px solid #4a4a4a;border-radius:3px"></div>
<div class="ab" style="left:824px;top:535px;width:16px;height:16px;background:linear-gradient(180deg,#b0b0b0,#8c8c8c);border:1px solid #4a4a4a;border-radius:3px"></div>
<div class="ab" style="left:841px;top:535px;width:15px;height:16px;background:linear-gradient(180deg,#b0b0b0,#8c8c8c);border:1px solid #4a4a4a;border-radius:3px"></div>
<svg class="ab" style="left:160px;top:535px" width="700" height="16"><path d="M11 4V12L6 8Z" fill="#0a0a0a"/><path d="M25 3L24 13M28 3L27 13" stroke="#3a3a3a" stroke-width="1.2"/><path d="M615 3L614 13M618 3L617 13" stroke="#3a3a3a" stroke-width="1.2"/><path d="M629 4.5V11.5L634 8Z" fill="#0a0a0a"/><path d="M645 8H652M648.5 4.5V11.5" stroke="#0a0a0a" stroke-width="1.8"/><path d="M668 8H675" stroke="#0a0a0a" stroke-width="1.8"/></svg>
<div class="ab" style="left:161px;top:551px;width:695px;height:1px;background:#b2b2b2"></div>
<div class="ab" style="left:161px;top:552px;width:695px;height:27px;background:#898989"></div>
<div class="ab" style="left:161px;top:579px;width:696px;height:1px;background:#b0b0b0"></div>
<div class="ab" style="left:856px;top:551px;width:1px;height:29px;background:#b0b0b0"></div>
<div class="ab" style="left:161px;top:555px;width:24px;height:20px;background:#7c7c7c;border:1px solid #3a3a3a;border-radius:3px;box-shadow:inset 1px 1px 0 #9a9a9a"></div>
<svg class="ab" style="left:161px;top:555px" width="24" height="20"><path d="M5 3H13M9 3V17M5 17H13" stroke="#1a1a90" stroke-width="2"/><path d="M14.5 8.5V6.5A2.5 2.5 0 0 1 19.5 6.5V8.5" fill="none" stroke="#203040" stroke-width="1.5"/><rect x="12.5" y="8.5" width="9" height="7" rx="1" fill="#6a8ab0" stroke="#1a2a40"/><rect x="16" y="11" width="2" height="2" fill="#0a1a30"/></svg>
<div class="ab" style="left:189px;top:556px;width:1px;height:19px;background:#b0b0b0"></div>
<svg class="ab" style="left:190px;top:555px" width="150" height="22"><path d="M7.5 4V17M94.5 4V17" stroke="#7c7cd0" stroke-width="1"/><path d="M15.5 3.5L22.5 10.5L15.5 17.5L8.5 10.5Z" fill="#d4d4f6" stroke="#7070c0" stroke-width="1"/><path d="M19.0 10.5H12.5M15.0 8L12.5 10.5L15.0 13" stroke="#0a0a3a" stroke-width="1.5" fill="none"/><path d="M39.5 3.5L46.5 10.5L39.5 17.5L32.5 10.5Z" fill="#d4d4f6" stroke="#7070c0" stroke-width="1"/><path d="M43.0 10.5H36.5M39.0 8L36.5 10.5L39.0 13" stroke="#0a0a3a" stroke-width="1.5" fill="none"/><path d="M63.5 3.5L70.5 10.5L63.5 17.5L56.5 10.5Z" fill="#d4d4f6" stroke="#7070c0" stroke-width="1"/><path d="M60.0 10.5H66.5M64.0 8L66.5 10.5L64.0 13" stroke="#0a0a3a" stroke-width="1.5" fill="none"/><path d="M87.5 3.5L94.5 10.5L87.5 17.5L80.5 10.5Z" fill="#d4d4f6" stroke="#7070c0" stroke-width="1"/><path d="M84.0 10.5H90.5M88.0 8L90.5 10.5L88.0 13" stroke="#0a0a3a" stroke-width="1.5" fill="none"/><path d="M111.5 3.5L118.5 10.5L111.5 17.5L104.5 10.5Z" fill="#d4d4f6" stroke="#7070c0" stroke-width="1"/><path d="M108.0 10.5H115.0M111.5 7V14" stroke="#0a0a3a" stroke-width="1.6"/><path d="M135.5 3.5L142.5 10.5L135.5 17.5L128.5 10.5Z" fill="#d4d4f6" stroke="#7070c0" stroke-width="1"/><path d="M132.0 10.5H139.0" stroke="#0a0a3a" stroke-width="1.6"/></svg>
<svg class="ab" style="left:772px;top:557px" width="9" height="16"><path d="M2 1.5H7Q7.5 1.5 7.5 2V8L5.5 10V14.5H3.5V10L1.5 8V2Q1.5 1.5 2 1.5Z" fill="#8a8a8a" stroke="#1a1a1a"/><rect x="3" y="3" width="3" height="2" fill="#e0e0e0"/></svg>
<div class="ab" style="left:787px;top:557px;width:66px;height:17px;background:#939393;border:1px solid #a8a8a8;border-top-color:#7a7a7a;border-left-color:#7a7a7a"></div>
<div class="t" style="left:790px;top:560.69px;font-size:11px;color:#0a0a0a;font-weight:normal;letter-spacing:0.12px">00:00:09;20</div>
</body></html>
